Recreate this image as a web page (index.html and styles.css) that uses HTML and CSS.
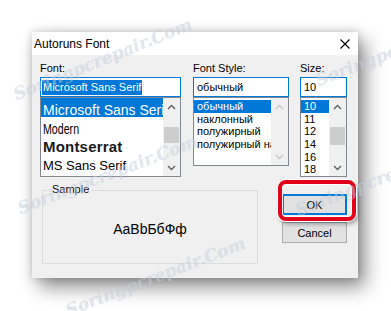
FILE: index.html
```html
<!DOCTYPE html>
<html>
<head>
<meta charset="utf-8">
<link rel="stylesheet" href="styles.css">
</head>
<body>
<div class="page">
  <div class="dialog">
    <div class="titlebar">
      <span class="title">Autoruns Font</span>
      <svg class="close" width="10" height="10" viewBox="0 0 10 10"><path d="M0.5 0.5 L9.5 9.5 M9.5 0.5 L0.5 9.5" stroke="#000" stroke-width="1.1" fill="none"/></svg>
    </div>
    <div class="body">
      <div class="top">
        <div class="col col-font">
          <div class="label">Font:</div>
          <div class="edit"><span class="sel">Microsoft Sans Serif</span></div>
          <div class="list list-font">
            <div class="items items-font">
              <div class="fitem f-ms selected">Microsoft Sans Serif</div>
              <div class="fitem f-modern short"><span>Modern</span></div>
              <div class="fitem f-mont">Montserrat</div>
              <div class="fitem f-mss">MS Sans Serif</div>
            </div>
            <div class="scroll">
              <div class="arrow"><svg width="9" height="6" viewBox="0 0 9 6"><path d="M1 5 L4.5 1.5 L8 5" stroke="#606060" stroke-width="1.4" fill="none"/></svg></div>
              <div class="track"><div class="thumb thumb-font"></div></div>
              <div class="arrow"><svg width="9" height="6" viewBox="0 0 9 6"><path d="M1 1 L4.5 4.5 L8 1" stroke="#606060" stroke-width="1.4" fill="none"/></svg></div>
            </div>
          </div>
        </div>
        <div class="col col-style">
          <div class="label">Font Style:</div>
          <div class="edit"><span class="val">обычный</span></div>
          <div class="list list-style">
            <div class="items items-small">
              <div class="sitem selected">обычный</div>
              <div class="sitem">наклонный</div>
              <div class="sitem">полужирный</div>
              <div class="sitem">полужирный наклонный</div>
            </div>
            <div class="scroll">
              <div class="arrow"><svg width="9" height="6" viewBox="0 0 9 6"><path d="M1 5 L4.5 1.5 L8 5" stroke="#c8c8c8" stroke-width="1.4" fill="none"/></svg></div>
              <div class="track"></div>
              <div class="arrow"><svg width="9" height="6" viewBox="0 0 9 6"><path d="M1 1 L4.5 4.5 L8 1" stroke="#c8c8c8" stroke-width="1.4" fill="none"/></svg></div>
            </div>
          </div>
        </div>
        <div class="col col-size">
          <div class="label">Size:</div>
          <div class="edit"><span class="val">10</span></div>
          <div class="list list-size">
            <div class="items items-small">
              <div class="sitem selected">10</div>
              <div class="sitem">11</div>
              <div class="sitem">12</div>
              <div class="sitem">14</div>
              <div class="sitem">16</div>
              <div class="sitem">18</div>
            </div>
            <div class="scroll">
              <div class="arrow"><svg width="9" height="6" viewBox="0 0 9 6"><path d="M1 5 L4.5 1.5 L8 5" stroke="#606060" stroke-width="1.4" fill="none"/></svg></div>
              <div class="track"><div class="thumb thumb-size"></div></div>
              <div class="arrow"><svg width="9" height="6" viewBox="0 0 9 6"><path d="M1 1 L4.5 4.5 L8 1" stroke="#606060" stroke-width="1.4" fill="none"/></svg></div>
            </div>
          </div>
        </div>
      </div>
      <div class="bottom">
        <div class="sample">
          <span class="sample-label">Sample</span>
          <div class="sample-text">AaBbБбФф</div>
        </div>
        <div class="buttons">
          <div class="ok-wrap">
            <div class="btn btn-ok">OK</div>
            <span class="highlight"></span>
          </div>
          <div class="btn">Cancel</div>
        </div>
      </div>
    </div>
  </div>
  <span class="wm wm1">Soringpcrepair.Com</span>
  <span class="wm wm2">Soringpcrepair.Com</span>
  <span class="wm wm3">Soringpcrepair.Com</span>
  <span class="wm wm4">Soringpcrepair.Com</span>
  <span class="wm wm5">Soringpcrepair.Com</span>
</div>
</body>
</html>
```
FILE: styles.css
```css
* { box-sizing: border-box; }
html, body { margin: 0; background: #fff; }
body {
  font-family: "Liberation Sans", Arial, sans-serif;
  color: #000;
  overflow: hidden;
}
.page {
  position: relative;
  width: 391px;
  height: 311px;
  padding: 32px 0 0 32px;
  overflow: hidden;
}
.dialog {
  width: 326px;
  height: 246px;
  display: flex;
  flex-direction: column;
  box-shadow: 7px 9px 18px rgba(0, 0, 0, 0.45), 0 0 8px rgba(0, 0, 0, 0.18);
}
.titlebar {
  height: 23px;
  background: #fff;
  display: flex;
  align-items: center;
  padding-left: 2px;
}
.title { font-size: 12px; }
.close { margin-left: auto; margin-right: 8px; }
.body {
  flex: 1;
  background: #f0f0f0;
  padding: 6px 0 0 8px;
}
.top { display: flex; align-items: flex-start; }
.col { display: flex; flex-direction: column; }
.col-font { width: 141px; margin-right: 12px; }
.col-style { width: 96px; margin-right: 11px; }
.col-size { width: 47px; }
.label { font-size: 11px; line-height: 14px; height: 16px; }
.edit {
  height: 20px;
  border: 1px solid #0078d7;
  background: #fff;
  font-size: 11px;
  display: flex;
  align-items: center;
  padding-left: 1px;
  white-space: nowrap;
  overflow: hidden;
}
.edit .sel {
  background: #0078d7;
  color: #fff;
  line-height: 15px;
  padding: 0 1px;
}
.edit .val { line-height: 15px; padding-left: 2px; }
.list {
  display: flex;
  border: 1px solid #828790;
  background: #fff;
}
.list-font { height: 80px; }
.list-style { height: 69px; }
.list-size { height: 80px; }
.items { flex: 1; overflow: hidden; min-width: 0; }
.fitem {
  height: 19px;
  padding: 5px 0 0 2px;
  line-height: 14px;
  white-space: nowrap;
  overflow: hidden;
}
.f-ms { font-size: 14px; }
.f-modern { height: 18px; font-size: 14px; }
.f-modern span { display: inline-block; transform: scaleX(0.76); transform-origin: left center; }
.f-mont { font-size: 15px; font-weight: bold; letter-spacing: 0.2px; color: #1a1a1a; }
.f-mss { font-size: 13px; }
.selected { background: #0078d7; color: #fff; }
.items-small { padding-top: 2px; }
.sitem {
  font-size: 11px;
  line-height: 12px;
  height: 12.7px;
  padding-left: 3px;
  white-space: nowrap;
  overflow: hidden;
}
.scroll {
  width: 17px;
  flex: none;
  background: #f0f0f0;
  display: flex;
  flex-direction: column;
}
.arrow {
  height: 17px;
  flex: none;
  display: flex;
  align-items: center;
  justify-content: center;
}
.track { flex: 1; padding: 12px 1px 0; }
.thumb { background: #cdcdcd; }
.thumb-font { height: 16px; }
.thumb-size { height: 18px; }
.bottom { display: flex; align-items: flex-start; margin-top: 13px; }
.sample {
  position: relative;
  margin-left: 2px;
  width: 216px;
  height: 74px;
  border: 1px solid #dcdcdc;
  display: flex;
  align-items: center;
  justify-content: center;
  padding-top: 3px;
}
.sample-label {
  position: absolute;
  top: -9px;
  left: 6px;
  padding: 0 3px;
  font-size: 11px;
  line-height: 14px;
  background: #f0f0f0;
}
.sample-text { font-size: 14px; }
.buttons {
  margin-left: 24px;
  margin-top: 4px;
  display: flex;
  flex-direction: column;
  gap: 7px;
}
.ok-wrap { position: relative; }
.btn {
  width: 65px;
  height: 21px;
  border: 1px solid #adadad;
  background: #e1e1e1;
  font-size: 11px;
  display: flex;
  align-items: center;
  justify-content: center;
}
.btn-ok { border: 2px solid #0078d7; }
.highlight {
  position: absolute;
  left: -4px;
  top: -14px;
  width: 78px;
  height: 41px;
  border: 4px solid #e3001b;
  border-radius: 8px;
  box-shadow: inset 0 0 0 1px #fff, 0 0 0 1px #fff, 2px 3px 4px rgba(0, 0, 0, 0.35);
}
.wm {
  position: absolute;
  font-family: "DejaVu Serif", serif;
  font-style: italic;
  font-weight: bold;
  font-size: 17px;
  color: rgba(215, 222, 235, 0.4);
  text-shadow: 0 0 1px rgba(140, 150, 170, 0.2);
  white-space: nowrap;
  transform-origin: left bottom;
  pointer-events: none;
}
.wm1 { left: 18px; top: 84px; transform: rotate(-22deg); }
.wm2 { left: 22px; top: 198px; transform: rotate(-21deg); }
.wm3 { left: 70px; top: 300px; transform: rotate(-21deg); }
.wm4 { left: 320px; top: 70px; transform: rotate(-21deg); }
.wm5 { left: 300px; top: 200px; transform: rotate(-21deg); }
```
